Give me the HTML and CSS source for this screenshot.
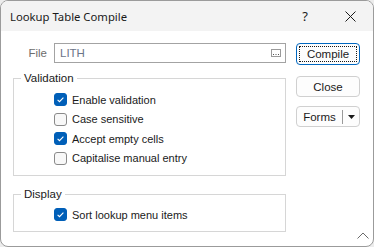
FILE: index.html
```html
<!DOCTYPE html>
<html lang="en">
<head>
    <meta charset="UTF-8">
    <title>Lookup Table Compile</title>
    <link rel="stylesheet" href="styles.css">
</head>
<body>
    <div class="window">
        <div class="titlebar">
            <span class="title">Lookup Table Compile</span>
            <span class="help">?</span>
            <svg class="close-x" width="11" height="11" viewBox="0 0 11 11">
                <path d="M0.5 0.5 L10.5 10.5 M10.5 0.5 L0.5 10.5" stroke="#1a1a1a" stroke-width="1" fill="none"/>
            </svg>
        </div>

        <div class="content">
            <div class="main">
                <div class="file-row">
                    <span class="file-label">File</span>
                    <div class="file-input">
                        <span class="file-value">LITH</span>
                        <svg class="browse" width="10" height="8" viewBox="0 0 10 8">
                            <rect x="0.5" y="0.5" width="9" height="7" fill="none" stroke="#9a9a9a"/>
                            <rect x="2" y="5" width="1" height="1" fill="#555"/>
                            <rect x="4.5" y="5" width="1" height="1" fill="#555"/>
                            <rect x="7" y="5" width="1" height="1" fill="#555"/>
                        </svg>
                    </div>
                </div>

                <fieldset class="group validation">
                    <legend>Validation</legend>
                    <div class="check-list">
                        <div class="check"><span class="box checked"><svg width="13" height="13" viewBox="0 0 13 13"><path d="M3.6 6.9 L5.5 8.7 L9.4 4.6" stroke="#fff" stroke-width="1.1" fill="none"/></svg></span>Enable validation</div>
                        <div class="check"><span class="box"></span>Case sensitive</div>
                        <div class="check"><span class="box checked"><svg width="13" height="13" viewBox="0 0 13 13"><path d="M3.6 6.9 L5.5 8.7 L9.4 4.6" stroke="#fff" stroke-width="1.1" fill="none"/></svg></span>Accept empty cells</div>
                        <div class="check"><span class="box"></span>Capitalise manual entry</div>
                    </div>
                </fieldset>

                <fieldset class="group display">
                    <legend>Display</legend>
                    <div class="check-list">
                        <div class="check"><span class="box checked"><svg width="13" height="13" viewBox="0 0 13 13"><path d="M3.6 6.9 L5.5 8.7 L9.4 4.6" stroke="#fff" stroke-width="1.1" fill="none"/></svg></span>Sort lookup menu items</div>
                    </div>
                </fieldset>
            </div>

            <div class="side">
                <button class="btn btn-default"><span class="focus-ring">Compile</span></button>
                <button class="btn">Close</button>
                <div class="btn split">
                    <span class="split-main">Forms</span>
                    <span class="split-arrow">
                        <svg width="7" height="4" viewBox="0 0 7 4"><path d="M0 0 L7 0 L3.5 4 Z" fill="#1a1a1a"/></svg>
                    </span>
                </div>
            </div>
        </div>

        <svg class="collapse" width="12" height="7" viewBox="0 0 12 7">
            <path d="M0.5 6.5 L6 1 L11.5 6.5" stroke="#6a6a6a" stroke-width="1" fill="none"/>
        </svg>
    </div>
</body>
</html>
```

FILE: styles.css
```css
body {
    margin: 0;
    background-color: #ececec;
    font-family: "Liberation Sans", Arial, sans-serif;
    font-size: 11px;
    color: #1a1a1a;
}

.window {
    position: relative;
    width: 374px;
    height: 247px;
    box-sizing: border-box;
    border: 1px solid #9b9b9b;
    border-radius: 8px;
    background-color: #fff;
    overflow: hidden;
}

.titlebar {
    height: 30px;
    background-color: #f3f3f3;
    display: flex;
    align-items: center;
    padding-left: 9px;
    font-family: "Noto Sans", sans-serif;
    font-size: 11.3px;
}

.title {
    flex: 1;
}

.help {
    font-size: 13px;
    margin-right: 37px;
}

.close-x {
    margin-right: 17px;
}

.content {
    display: flex;
    padding: 12px 0 0 12px;
    gap: 10px;
}

.main {
    width: 273px;
}

/* file row */
.file-row {
    display: flex;
    align-items: center;
    gap: 7px;
    height: 20px;
}

.file-label {
    width: 34px;
    text-align: right;
    color: #6d6d6d;
    font-size: 11.5px;
}

.file-input {
    flex: 1;
    height: 20px;
    box-sizing: border-box;
    border: 1px solid #a3a3a3;
    display: flex;
    align-items: center;
    padding: 0 4px 0 5px;
}

.file-value {
    flex: 1;
    color: #6b7489;
    font-size: 11.5px;
}

/* group boxes */
.group {
    margin: 7px 0 0 0;
    padding: 0 0 7px 0;
    border: 1px solid #d6d6d6;
}

.group legend {
    margin-left: 7px;
    padding: 0 3px;
    line-height: 16px;
    font-size: 11.5px;
}

.validation .check-list {
    padding-top: 4px;
}

.display {
    margin-top: 10px;
    padding-bottom: 6px;
}

.display .check-list {
    padding-top: 3px;
}

.check-list {
    padding-left: 40px;
    display: flex;
    flex-direction: column;
}

.check {
    height: 19.5px;
    display: flex;
    align-items: center;
    gap: 5px;
}

.box {
    width: 13px;
    height: 13px;
    box-sizing: border-box;
    border: 1px solid #8a8a8a;
    border-radius: 3px;
    background-color: #f8f8f8;
    display: flex;
}

.box.checked {
    border-color: #005fb8;
    background-color: #005fb8;
}

.box.checked svg {
    margin: -1px;
}

/* buttons */
.side {
    width: 64px;
    display: flex;
    flex-direction: column;
}

.btn {
    height: 21px;
    box-sizing: border-box;
    border: 1px solid #d0d0d0;
    border-radius: 4px;
    background-color: #fdfdfd;
    font-family: inherit;
    font-size: 11.5px;
    color: #1a1a1a;
    padding: 0;
    margin-bottom: 9px;
    display: flex;
    align-items: center;
    justify-content: center;
}

.btn-default {
    height: 22px;
    border-color: #0067c0;
    padding: 2px;
    margin-bottom: 11px;
}

.focus-ring {
    flex: 1;
    align-self: stretch;
    display: flex;
    align-items: center;
    justify-content: center;
    border: 1px dotted #1a1a1a;
}

.split {
    justify-content: flex-start;
}

.split-main {
    width: 45px;
    text-align: center;
    border-right: 1px solid #9a9a9a;
    line-height: 14px;
}

.split-arrow {
    flex: 1;
    display: flex;
    justify-content: center;
}

.collapse {
    position: absolute;
    right: 4px;
    bottom: 7px;
}
```
